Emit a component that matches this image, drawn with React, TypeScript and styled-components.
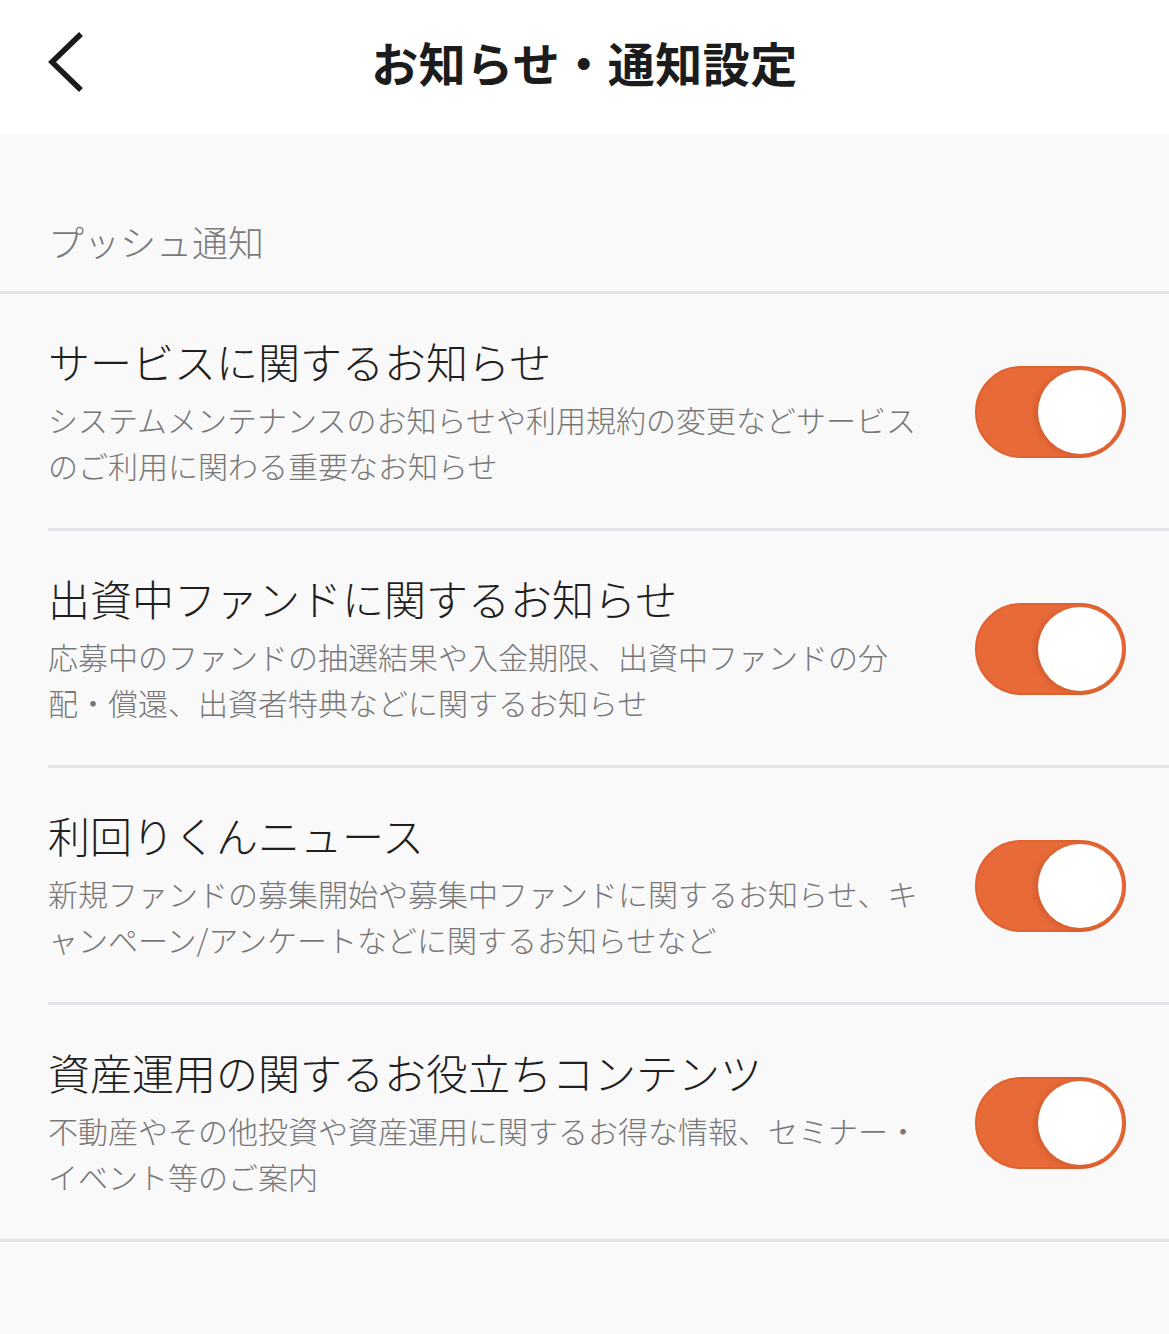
import { FC, useState } from 'react'
import styled, { createGlobalStyle } from 'styled-components'

const GlobalStyle = createGlobalStyle`
  html, body {
    margin: 0;
    padding: 0;
    background: #f9f9fa;
  }
  body {
    font-family: "Noto Sans CJK JP", "Noto Sans", sans-serif;
    -webkit-font-smoothing: antialiased;
  }
  * {
    box-sizing: border-box;
  }
`

const Page = styled.div`
  min-height: 1334px;
  background: #f9f9fa;
`

const Header = styled.header`
  display: grid;
  grid-template-columns: 1fr auto 1fr;
  align-items: center;
  height: 135px;
  padding-bottom: 12px;
  background: #ffffff;
`

const BackButton = styled.button`
  justify-self: start;
  display: flex;
  align-items: center;
  margin-left: 44px;
  padding: 0;
  border: none;
  background: none;
  cursor: pointer;
`

const Title = styled.h1`
  margin: 0;
  font-size: 47px;
  font-weight: 700;
  color: #1c1c1c;
  letter-spacing: 0.5px;
`

const SectionHeader = styled.div`
  padding: 84px 48px 28px;
  font-size: 36px;
  font-weight: 300;
  line-height: 44px;
  color: #7a7a7a;
  border-bottom: 3px solid #e1e3e8;
`

const List = styled.ul`
  margin: 0;
  padding: 0;
  list-style: none;
  border-bottom: 3px solid #e1e3e8;
`

const Row = styled.li`
  display: flex;
  align-items: center;
  justify-content: space-between;
  margin-left: 48px;
  padding: 42px 43px 40px 0;

  &:not(:last-child) {
    border-bottom: 3px solid #e1e3e8;
  }
`

const TextBlock = styled.div`
  max-width: 885px;
`

const RowTitle = styled.div`
  font-size: 42px;
  line-height: 50px;
  color: #1f1f1f;
  font-weight: 300;
`

const RowDescription = styled.p`
  margin: 10px 0 0;
  font-size: 30px;
  font-weight: 300;
  line-height: 46px;
  color: #777777;
`

const Switch = styled.button<{ $on: boolean }>`
  position: relative;
  flex-shrink: 0;
  width: 151px;
  height: 92px;
  padding: 0;
  border-radius: 46px;
  border: 2px solid ${({ $on }) => ($on ? '#df6231' : '#d8d8d8')};
  background: ${({ $on }) => ($on ? '#e96a39' : '#e6e6e6')};
  cursor: pointer;
  transition: background 0.2s;
`

const Knob = styled.span<{ $on: boolean }>`
  position: absolute;
  top: 2px;
  left: ${({ $on }) => ($on ? '61px' : '2px')};
  width: 84px;
  height: 84px;
  border-radius: 50%;
  background: #ffffff;
  box-shadow: -3px 1px 6px rgba(140, 50, 10, 0.25);
  transition: left 0.2s;
`

const ChevronLeft: FC = () => (
  <svg width="40" height="60" viewBox="0 0 40 60" fill="none">
    <polyline
      points="35,4 8,30 35,56"
      stroke="#1a1a1a"
      strokeWidth="5.5"
      strokeLinecap="square"
      strokeLinejoin="miter"
    />
  </svg>
)

type Setting = {
  id: string
  title: string
  description: string
}

const settings: Setting[] = [
  {
    id: 'service',
    title: 'サービスに関するお知らせ',
    description:
      'システムメンテナンスのお知らせや利用規約の変更などサービスのご利用に関わる重要なお知らせ',
  },
  {
    id: 'fund',
    title: '出資中ファンドに関するお知らせ',
    description:
      '応募中のファンドの抽選結果や入金期限、出資中ファンドの分配・償還、出資者特典などに関するお知らせ',
  },
  {
    id: 'news',
    title: '利回りくんニュース',
    description:
      '新規ファンドの募集開始や募集中ファンドに関するお知らせ、キャンペーン/アンケートなどに関するお知らせなど',
  },
  {
    id: 'contents',
    title: '資産運用の関するお役立ちコンテンツ',
    description:
      '不動産やその他投資や資産運用に関するお得な情報、セミナー・イベント等のご案内',
  },
]

const App: FC = () => {
  const [enabled, setEnabled] = useState<Record<string, boolean>>({
    service: true,
    fund: true,
    news: true,
    contents: true,
  })

  const toggle = (id: string) => {
    setEnabled((prev) => ({ ...prev, [id]: !prev[id] }))
  }

  return (
    <Page>
      <GlobalStyle />
      <Header>
        <BackButton aria-label="戻る">
          <ChevronLeft />
        </BackButton>
        <Title>お知らせ・通知設定</Title>
        <span />
      </Header>

      <SectionHeader>プッシュ通知</SectionHeader>

      <List>
        {settings.map((s) => (
          <Row key={s.id}>
            <TextBlock>
              <RowTitle>{s.title}</RowTitle>
              <RowDescription>{s.description}</RowDescription>
            </TextBlock>
            <Switch
              $on={enabled[s.id]}
              role="switch"
              aria-checked={enabled[s.id]}
              onClick={() => toggle(s.id)}
            >
              <Knob $on={enabled[s.id]} />
            </Switch>
          </Row>
        ))}
      </List>
    </Page>
  )
}

export default App
